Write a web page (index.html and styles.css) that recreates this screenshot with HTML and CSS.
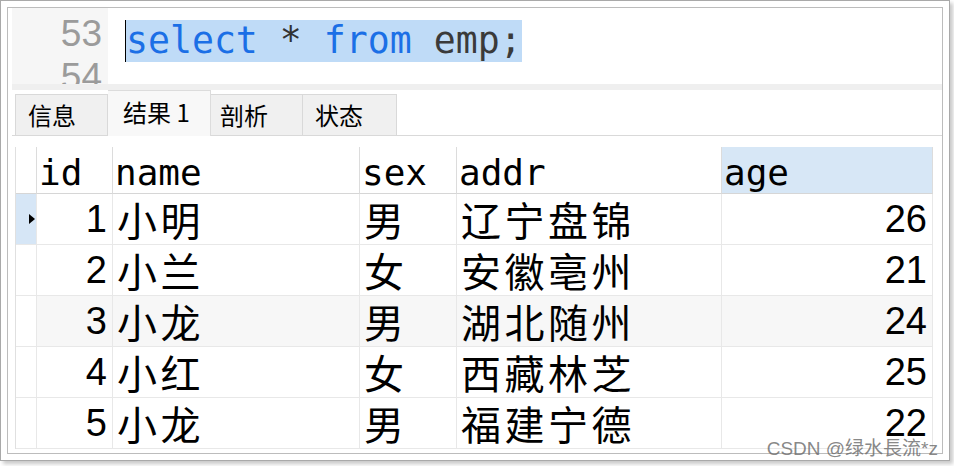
FILE: index.html
```html
<!DOCTYPE html>
<html lang="zh-CN">
<head>
<meta charset="utf-8">
<title>select * from emp;</title>
<link rel="stylesheet" href="styles.css">
</head>
<body>
<div class="shot">
  <div class="frame">
    <div class="editor">
      <div class="gutter">
        <div class="ln">53</div>
        <div class="ln">54</div>
      </div>
      <div class="code"><span class="sel"><span class="kw">select</span> <span class="op">*</span> <span class="kw">from</span> <span class="ident">emp;</span></span></div>
    </div>
    <div class="band"></div>
    <div class="tabs">
      <div class="tab tab-info">信息</div>
      <div class="tab tab-active">结果 1</div>
      <div class="tab tab-prof">剖析</div>
      <div class="tab tab-stat">状态</div>
    </div>
    <div class="grid-wrap">
      <div class="grid">
        <div class="c h"></div>
        <div class="c h">id</div>
        <div class="c h">name</div>
        <div class="c h">sex</div>
        <div class="c h">addr</div>
        <div class="c h h-sel">age</div>

        <div class="c ind ind-cur"><span class="tri"></span></div>
        <div class="c num">1</div>
        <div class="c cjk">小明</div>
        <div class="c cjk">男</div>
        <div class="c cjk">辽宁盘锦</div>
        <div class="c num">26</div>

        <div class="c ind"></div>
        <div class="c num">2</div>
        <div class="c cjk">小兰</div>
        <div class="c cjk">女</div>
        <div class="c cjk">安徽亳州</div>
        <div class="c num">21</div>

        <div class="c ind"></div>
        <div class="c num alt">3</div>
        <div class="c cjk alt">小龙</div>
        <div class="c cjk alt">男</div>
        <div class="c cjk alt">湖北随州</div>
        <div class="c num alt">24</div>

        <div class="c ind"></div>
        <div class="c num">4</div>
        <div class="c cjk">小红</div>
        <div class="c cjk">女</div>
        <div class="c cjk">西藏林芝</div>
        <div class="c num">25</div>

        <div class="c ind"></div>
        <div class="c num">5</div>
        <div class="c cjk">小龙</div>
        <div class="c cjk">男</div>
        <div class="c cjk">福建宁德</div>
        <div class="c num">22</div>
      </div>
    </div>
  </div>
  <div class="wm">CSDN @绿水長流*z</div>
</div>
</body>
</html>
```
FILE: styles.css
```css
* { box-sizing: border-box; }
html, body { margin: 0; padding: 0; }
body {
  width: 954px;
  height: 466px;
  overflow: hidden;
  background: #fff;
  font-family: "Liberation Sans", "Noto Sans CJK SC", sans-serif;
}
.shot {
  position: relative;
  width: 950px;
  height: 461px;
  border: 1px solid #a9a9a9;
  padding: 6px;
  background: #fff;
  box-shadow: 3px 3px 4px rgba(0, 0, 0, 0.22);
}
.frame {
  height: 100%;
  border: 1px solid #bcbcbc;
  padding-left: 4px;
  display: flex;
  flex-direction: column;
  overflow: hidden;
}

/* editor */
.editor {
  height: 76px;
  flex: none;
  display: flex;
}
.gutter {
  width: 96px;
  background: #f6f6f6;
  padding: 4px 6px 0 0;
  text-align: right;
  font: 37px/43px "Liberation Sans", sans-serif;
  color: #9b9b9b;
  overflow: hidden;
}
.code {
  flex: 1;
  padding: 12px 0 0 17px;
  font: 36.5px/42px "DejaVu Sans Mono", monospace;
  white-space: pre;
  background: #fff;
}
.sel {
  display: inline-block;
  height: 42px;
  background: #bfdbf7;
  border-left: 1px solid #000;
}
.kw { color: #1b6fe6; }
.op { color: #333; }
.ident { color: #3a3a3a; }

.band {
  height: 6px;
  flex: none;
  background: #efefef;
}

/* tabs */
.tabs {
  height: 46px;
  flex: none;
  display: flex;
  align-items: flex-end;
  padding-left: 3px;
  border-bottom: 1px solid #d9d9d9;
  background: #fff;
}
.tab {
  height: 41px;
  background: #f0f0f0;
  border: 1px solid #d9d9d9;
  border-bottom: none;
  border-left: none;
  font: 24px/40px "Noto Sans CJK SC", sans-serif;
  color: #000;
  padding-left: 12px;
  white-space: nowrap;
}
.tab-info { width: 93px; border-left: 1px solid #d9d9d9; }
.tab-active {
  width: 103px;
  height: 46px;
  margin-bottom: -1px;
  background: #f8f8f8;
  border-color: #dcdcdc;
  padding-left: 15px;
  line-height: 41px;
}
.tab-prof { width: 92px; padding-left: 9px; }
.tab-stat { width: 94px; padding-left: 12px; }

/* grid */
.grid-wrap {
  flex: 1;
  padding: 11px 0 0 3px;
  background: #fff;
}
.grid {
  display: grid;
  grid-template-columns: 21px 76px 247px 97px 265px 211px;
  grid-template-rows: 47px repeat(5, 51px);
  border-left: 1px solid #e0e0e0;
  width: max-content;
}
.c {
  border-right: 1px solid #e8e8e8;
  border-bottom: 1px solid #e8e8e8;
  display: flex;
  align-items: center;
  white-space: nowrap;
  background: #fff;
  color: #000;
  min-width: 0;
}
.h {
  border-right-color: #dcdcdc;
  border-bottom-color: #d6d6d6;
  font: 36px/42px "DejaVu Sans Mono", monospace;
  padding: 5px 0 0 2px;
}
.h-sel { background: #d7e7f6; }
.num {
  justify-content: flex-end;
  padding-right: 5px;
  font: 38px/44px "Liberation Sans", sans-serif;
}
.cjk {
  padding: 0 0 1px 4px;
  font: 40px/46px "Noto Sans CJK SC", sans-serif;
  letter-spacing: 3.5px;
}
.alt { background: #f7f7f7; }
.ind {
  justify-content: flex-end;
  padding-right: 1px;
}
.ind-cur { background: #d6e6f6; }
.tri {
  width: 0;
  height: 0;
  border-top: 5px solid transparent;
  border-bottom: 5px solid transparent;
  border-left: 6px solid #000;
}

/* watermark */
.wm {
  position: absolute;
  right: 11px;
  bottom: 2px;
  font: 19px/19px "Liberation Sans", "Noto Sans CJK SC", sans-serif;
  color: rgba(105, 105, 105, 0.8);
  white-space: nowrap;
}
```
